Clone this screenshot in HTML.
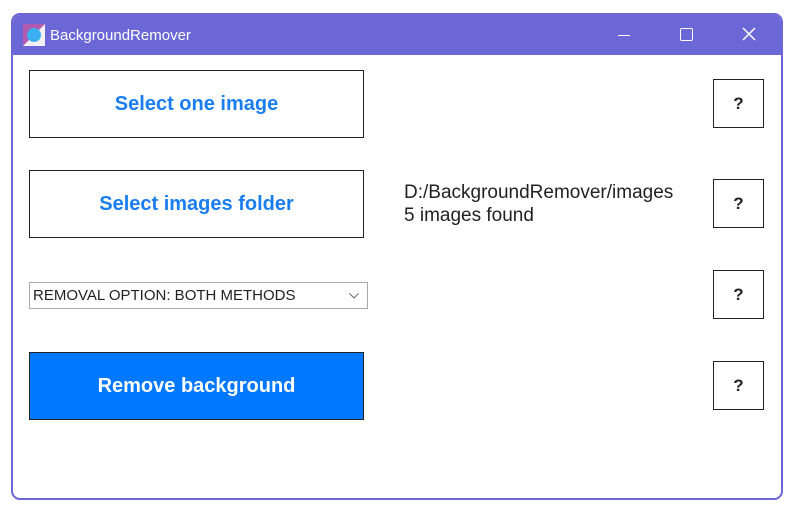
<!DOCTYPE html>
<html><head><style>
body{margin:0;width:794px;height:514px;background:#fff;position:relative;font-family:"Liberation Sans",Arial,sans-serif;overflow:hidden}
.win{position:absolute;left:11px;top:13px;width:768px;height:483px;border:2px solid #6b67d6;border-radius:9px;overflow:hidden;background:#fff}
.tb{position:absolute;left:0;top:0;right:0;height:40px;background:#6b67d6;color:#fff;font-size:15px}
.b{position:absolute;box-sizing:border-box;border:1px solid #222;display:flex;align-items:center;justify-content:center;font-weight:bold;font-size:20px}
.q{position:absolute;box-sizing:border-box;border:1px solid #222;width:51px;height:49px;left:713px;display:flex;align-items:center;justify-content:center;font-weight:bold;font-size:17px;color:#222}
</style></head><body>
<div class="win"><div class="tb">
<svg style="position:absolute;left:10px;top:9px" width="22" height="22"><rect width="22" height="22" fill="#f3f0f8"/><polygon points="0,0 22,0 0,22" fill="#b05ab0"/><circle cx="11" cy="11" r="7" fill="#3ab0f0"/></svg>
<span style="position:absolute;left:37px;top:12px">BackgroundRemover</span>
<div style="position:absolute;left:605px;top:20px;width:12px;height:1px;background:#fff"></div>
<div style="position:absolute;left:667px;top:13px;width:11px;height:11px;border:1.5px solid #fff;border-radius:2px"></div>
<svg style="position:absolute;left:729px;top:12px" width="14" height="14"><path d="M1 1L13 13M13 1L1 13" stroke="#fff" stroke-width="1.5"/></svg>
</div></div>
<div class="b" style="left:29px;top:70px;width:335px;height:68px;color:#1a7ef0">Select one image</div>
<div class="b" style="left:29px;top:170px;width:335px;height:68px;color:#1a7ef0">Select images folder</div>
<div style="position:absolute;left:404px;top:181px;font-size:19px;line-height:23px;color:#222">D:/BackgroundRemover/images<br>5 images found</div>
<div style="position:absolute;left:29px;top:282px;width:339px;height:27px;box-sizing:border-box;border:1px solid #aaa;font-size:15px;line-height:25px;padding-left:3px;color:#222">REMOVAL OPTION: BOTH METHODS
<svg style="position:absolute;right:8px;top:10px" width="10" height="6"><path d="M0.5 0.5L5 5L9.5 0.5" stroke="#666" fill="none"/></svg></div>
<div class="b" style="left:29px;top:352px;width:335px;height:68px;background:#0078ff;color:#fff">Remove background</div>
<div class="q" style="top:79px">?</div>
<div class="q" style="top:179px">?</div>
<div class="q" style="top:270px">?</div>
<div class="q" style="top:361px">?</div>
</body></html>
